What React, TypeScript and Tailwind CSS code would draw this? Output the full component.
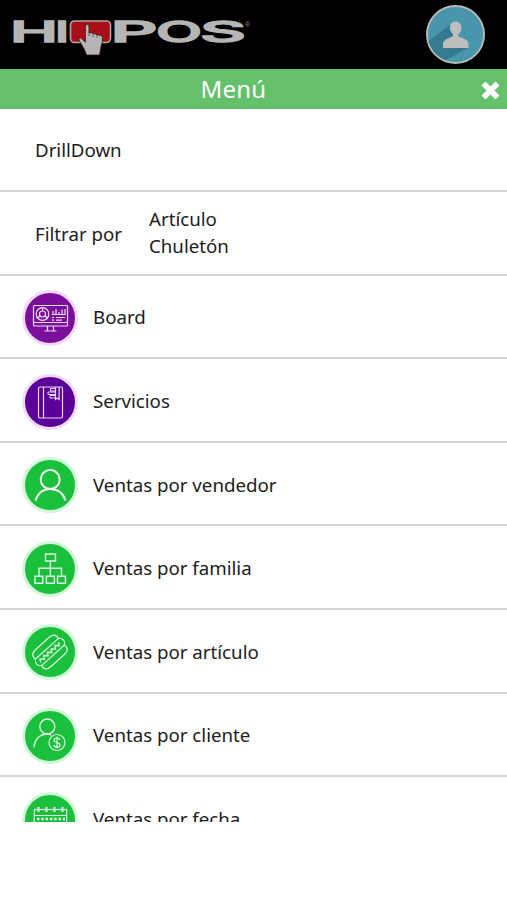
const menuItems = [
  { label: "Board", color: "bg-[#7b0f9c]", ring: "border-[#efd9f6]", icon: <BoardIcon /> },
  { label: "Servicios", color: "bg-[#5a0099]", ring: "border-[#ecdcf8]", icon: <BookIcon /> },
  { label: "Ventas por vendedor", color: "bg-[#1abf3c]", ring: "border-[#d3f6da]", icon: <PersonIcon /> },
  { label: "Ventas por familia", color: "bg-[#1abf3c]", ring: "border-[#d3f6da]", icon: <TreeIcon /> },
  { label: "Ventas por artículo", color: "bg-[#1abf3c]", ring: "border-[#d3f6da]", icon: <HotDogIcon /> },
  { label: "Ventas por cliente", color: "bg-[#1abf3c]", ring: "border-[#d3f6da]", icon: <ClientIcon /> },
  { label: "Ventas por fecha", color: "bg-[#1abf3c]", ring: "border-[#d3f6da]", icon: <CalendarIcon /> },
];

const App = () => {
  return (
    <div
      className="h-[900px] w-full overflow-hidden bg-white text-[18.7px] text-[#202020]"
      style={{ fontFamily: '"Noto Sans", sans-serif' }}
    >
      {/* header */}
      <div className="flex h-[68.5px] items-start justify-between bg-black">
        <Logo />
        <Avatar />
      </div>
      {/* title bar */}
      <div className="relative flex h-10 items-center justify-center bg-[#64c06a] pr-[40px]">
        <p className="text-[24px] leading-none tracking-[0.2px] text-white">Menú</p>
        <button className="absolute top-[12px] right-[7px]">
          <svg width="19" height="19" viewBox="0 0 19 19" stroke="#fff" strokeWidth="5.6">
            <path d="M2.500 2.500 16.500 16.500M16.500 2.500 2.500 16.500" />
          </svg>
        </button>
      </div>
      {/* menu list */}
      <div className="h-[713.5px] overflow-hidden">
        <div className="flex h-[83.6px] items-center border-b-2 border-[#d3d3d3] pt-px pl-[35px]">
          <p>DrillDown</p>
        </div>
        <div className="flex h-[83.6px] items-center border-b-2 border-[#d3d3d3] pt-[2px] pl-[35px]">
          <p className="w-[114px]">Filtrar por</p>
          <div className="-mt-[3px] leading-[27px]">
            <p>Artículo</p>
            <p>Chuletón</p>
          </div>
        </div>
        {menuItems.map((item) => (
          <MenuRow key={item.label} {...item} />
        ))}
      </div>
    </div>
  );
};

export default App;

const MenuRow = ({ label, color, ring, icon }: any) => {
  return (
    <div className="flex h-[83.6px] items-center border-b-2 border-[#d3d3d3] pt-[3px] pl-[22px]">
      <div className={`h-[56px] w-[56px] shrink-0 rounded-full border-[3px] ${color} ${ring}`}>
        <svg
          className="-m-[3px]"
          width="56"
          height="56"
          viewBox="0 0 56 56"
          fill="none"
          stroke="#fff"
          strokeOpacity="0.85"
          strokeWidth="1.2"
        >
          {icon}
        </svg>
      </div>
      <p className="-mt-px ml-[15px]">{label}</p>
    </div>
  );
};

function Logo() {
  return (
    <svg width="260" height="68" viewBox="0 0 260 68">
      <g fill="#b5b5b5" stroke="#b5b5b5" strokeWidth="1.4" fontFamily="Inter" fontWeight="500" fontSize="28.5">
        <text x="10" y="42" textLength="48" lengthAdjust="spacingAndGlyphs">H</text>
        <text x="55" y="42" textLength="14" lengthAdjust="spacingAndGlyphs">I</text>
        <text x="110.500" y="42" textLength="47" lengthAdjust="spacingAndGlyphs">P</text>
        <text x="156" y="42" textLength="46" lengthAdjust="spacingAndGlyphs">O</text>
        <text x="200" y="42" textLength="46" lengthAdjust="spacingAndGlyphs">S</text>
      </g>
      <rect x="70.5" y="21" width="40" height="21.5" rx="4" fill="#a80f17" stroke="#aaa" strokeWidth="1.6" />
      <path
        d="M85.400 26.500q0-2.200 1.800-2.200t1.800 2.200V33q3-1 4.200.8 3-.4 3.800 1.200 4.500-.6 5.500 2.600.5 4-1.500 9L99.500 55H86.500l-2-5.500-5.600-9.500q-.2-3 2.200-2l4.300 4.300z"
        fill="#b5b5b5"
        stroke="#3a1515"
        strokeWidth="0.8"
      />
      <path d="M89 33v3M93.200 34v3M97 35v3" stroke="#555" strokeWidth="0.8" />
      <text x="245" y="27" fill="#888" fontSize="7" fontFamily="Liberation Sans">®</text>
    </svg>
  );
}

function Avatar() {
  return (
    <svg className="mt-[4px] mr-[21px]" width="61" height="61" viewBox="0 0 61 61">
      <circle cx="30.500" cy="30.500" r="28.500" fill="#4796ac" stroke="#b9b9b9" strokeWidth="2" />
      <path d="M26 20 3.500 37a28 28 0 0 0 17 19L43 44z" fill="#347a90" />
      <path
        d="M30.500 17.500c-3.500 0-5.500 2.500-5.500 6 0 3 1.200 5 3 6.500v2c-1.500 2-10 2.500-10 8v4h25.500v-4c0-5.500-8.500-6-10-8v-2c1.800-1.500 3-3.500 3-6.500 0-3.500-2.500-6-6-6"
        fill="#bdbdbd"
      />
    </svg>
  );
}

function BoardIcon() {
  return (
    <>
      <rect x="11.500" y="15.500" width="34" height="20.500" rx="1" />
      <path d="M11.500 32.500h34M25.500 36v4.500M31.500 36v4.500M22.500 41h12" />
      <circle cx="20.500" cy="24" r="6.300" />
      <circle cx="20.500" cy="24" r="3" />
      <path d="M20.500 17.700V21M23 26l3 2.300M18 26l-3 2.300" />
      <path d="M31 24v-3M34 24v-5M37 24v-2M40 24v-4.500M43 24v-5M29.800 24.500h14M30 27.500h2M34 27.500h9M30 30.200h2M34 30.200h6" />
    </>
  );
}

function BookIcon() {
  return (
    <>
      <rect x="16.500" y="13" width="24" height="31" rx="1.500" />
      <path d="M21.500 13v31M33.500 13v12.500l1.800-1.500 1.800 1.500V13" />
      <path strokeWidth="1" d="M33.500 14.500h-5v2.500h5M33.500 18h-7.500v2.500h7.500M33.500 21.500h-5.500v2.500h5.500" />
    </>
  );
}

function PersonIcon() {
  return (
    <g strokeWidth="2" strokeOpacity="0.95">
      <circle cx="28.200" cy="22.500" r="9.500" />
      <path d="M13.500 43.500C16 36 21 32 28.200 32S41 36 43.500 43.500" />
    </g>
  );
}

function TreeIcon() {
  return (
    <g strokeWidth="1.400">
      <path d="M23.500 13h10v7h-10zM13 35.300h7.800v7H13zM24.400 35.300h8v7h-8zM35.500 35.300h8v7h-8zM28.400 20v15.300M17 35.300v-8h22.500v8" />
    </g>
  );
}

function HotDogIcon() {
  return (
    <g transform="rotate(-42 28 28)">
      <path d="M13 24c-2-5 1-7.500 6-7.500h18c5 0 8 2.500 6 7.500M13 32c-2 5 1 7.500 6 7.500h18c5 0 8-2.500 6-7.500" />
      <rect x="10" y="23.500" width="36" height="9" rx="4.500" />
      <path strokeWidth="1.400" d="m14 29.500 2-3 3 3 2-3 3 3 2-3 3 3 2-3 3 3 2-3 3 3 2-3" />
    </g>
  );
}

function ClientIcon() {
  return (
    <>
      <g strokeWidth="1.400">
        <circle cx="25.300" cy="18.500" r="7.500" />
        <path d="M12 39.500C12.500 30 19 26 25.300 26q2 0 4 1" />
      </g>
      <circle cx="35" cy="34.500" r="8" />
      <path d="M38 32c-.5-1.500-1.700-2-3-2-2 0-3 1-3 2.300 0 3 6 1.400 6 4.600 0 1.400-1.200 2.300-3 2.300-1.600 0-2.800-.7-3.200-2.200M35 28.500v12" />
    </>
  );
}

function CalendarIcon() {
  return (
    <>
      <rect x="12.300" y="17.500" width="32.300" height="25" />
      <path d="M12.300 23.500h32.300" />
      <path strokeWidth="2" d="M16.500 15v5M24.500 15v5M32.500 15v5M40.500 15v5" />
      <path strokeWidth="2.500" strokeDasharray="2.500 1.800" d="M15 27h28M15 32h28" />
    </>
  );
}
